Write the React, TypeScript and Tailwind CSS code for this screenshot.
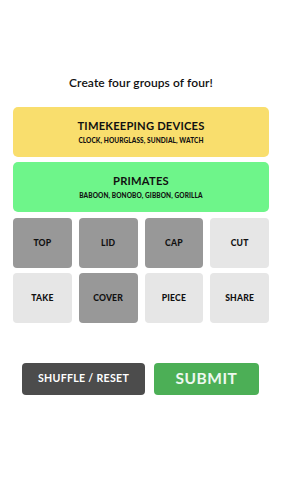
const tiles: { label: string; selected: boolean }[] = [
  { label: "TOP", selected: true },
  { label: "LID", selected: true },
  { label: "CAP", selected: true },
  { label: "CUT", selected: false },
  { label: "TAKE", selected: false },
  { label: "COVER", selected: true },
  { label: "PIECE", selected: false },
  { label: "SHARE", selected: false },
];

const groups = [
  { title: "TIMEKEEPING DEVICES", words: "CLOCK, HOURGLASS, SUNDIAL, WATCH", color: "bg-[#f9de6d]" },
  { title: "PRIMATES", words: "BABOON, BONOBO, GIBBON, GORILLA", color: "bg-[#6ef58a]" },
];

export default function App() {
  return (
    <div
      className="flex h-[501px] w-[282px] flex-col bg-white text-[#111]"
      style={{ fontFamily: '"Lato", "Open Sans", sans-serif' }}
    >
      <h1 className="mt-[74px] text-center text-[12px] font-semibold tracking-[0.1px]">
        Create four groups of four!
      </h1>

      <div className="mx-[13px] mt-[15px] flex flex-col gap-[5px]">
        {groups.map((g) => (
          <div
            key={g.title}
            className={`flex h-[50px] flex-col items-center justify-center rounded-[5px] ${g.color}`}
          >
            <div className="text-[11.2px] font-bold leading-none tracking-[0.2px]">{g.title}</div>
            <div className="mt-[7px] text-[6.5px] font-black leading-none tracking-[0.1px]">{g.words}</div>
          </div>
        ))}

        <div className="mt-[1px] grid grid-cols-4 gap-x-[7px] gap-y-[5px]">
          {tiles.map((t) => (
            <div
              key={t.label}
              className={`flex h-[50px] items-center justify-center rounded-[4px] text-[8.6px] font-black tracking-[0.2px] ${
                t.selected ? "bg-[#989898]" : "bg-[#e6e6e6]"
              }`}
            >
              {t.label}
            </div>
          ))}
        </div>
      </div>

      <div className="mx-[22px] mt-[40px] flex gap-[9px]">
        <button className="flex h-[32px] w-[123px] items-center justify-center rounded-[4px] bg-[#4c4c4c] text-[10.6px] font-bold tracking-[0.3px] text-white">
          SHUFFLE / RESET
        </button>
        <button className="flex h-[32px] w-[105px] items-center justify-center rounded-[4px] bg-[#4caf56] text-[15.5px] font-bold tracking-[0.5px] text-[#eef8ef]">
          SUBMIT
        </button>
      </div>
    </div>
  );
}
